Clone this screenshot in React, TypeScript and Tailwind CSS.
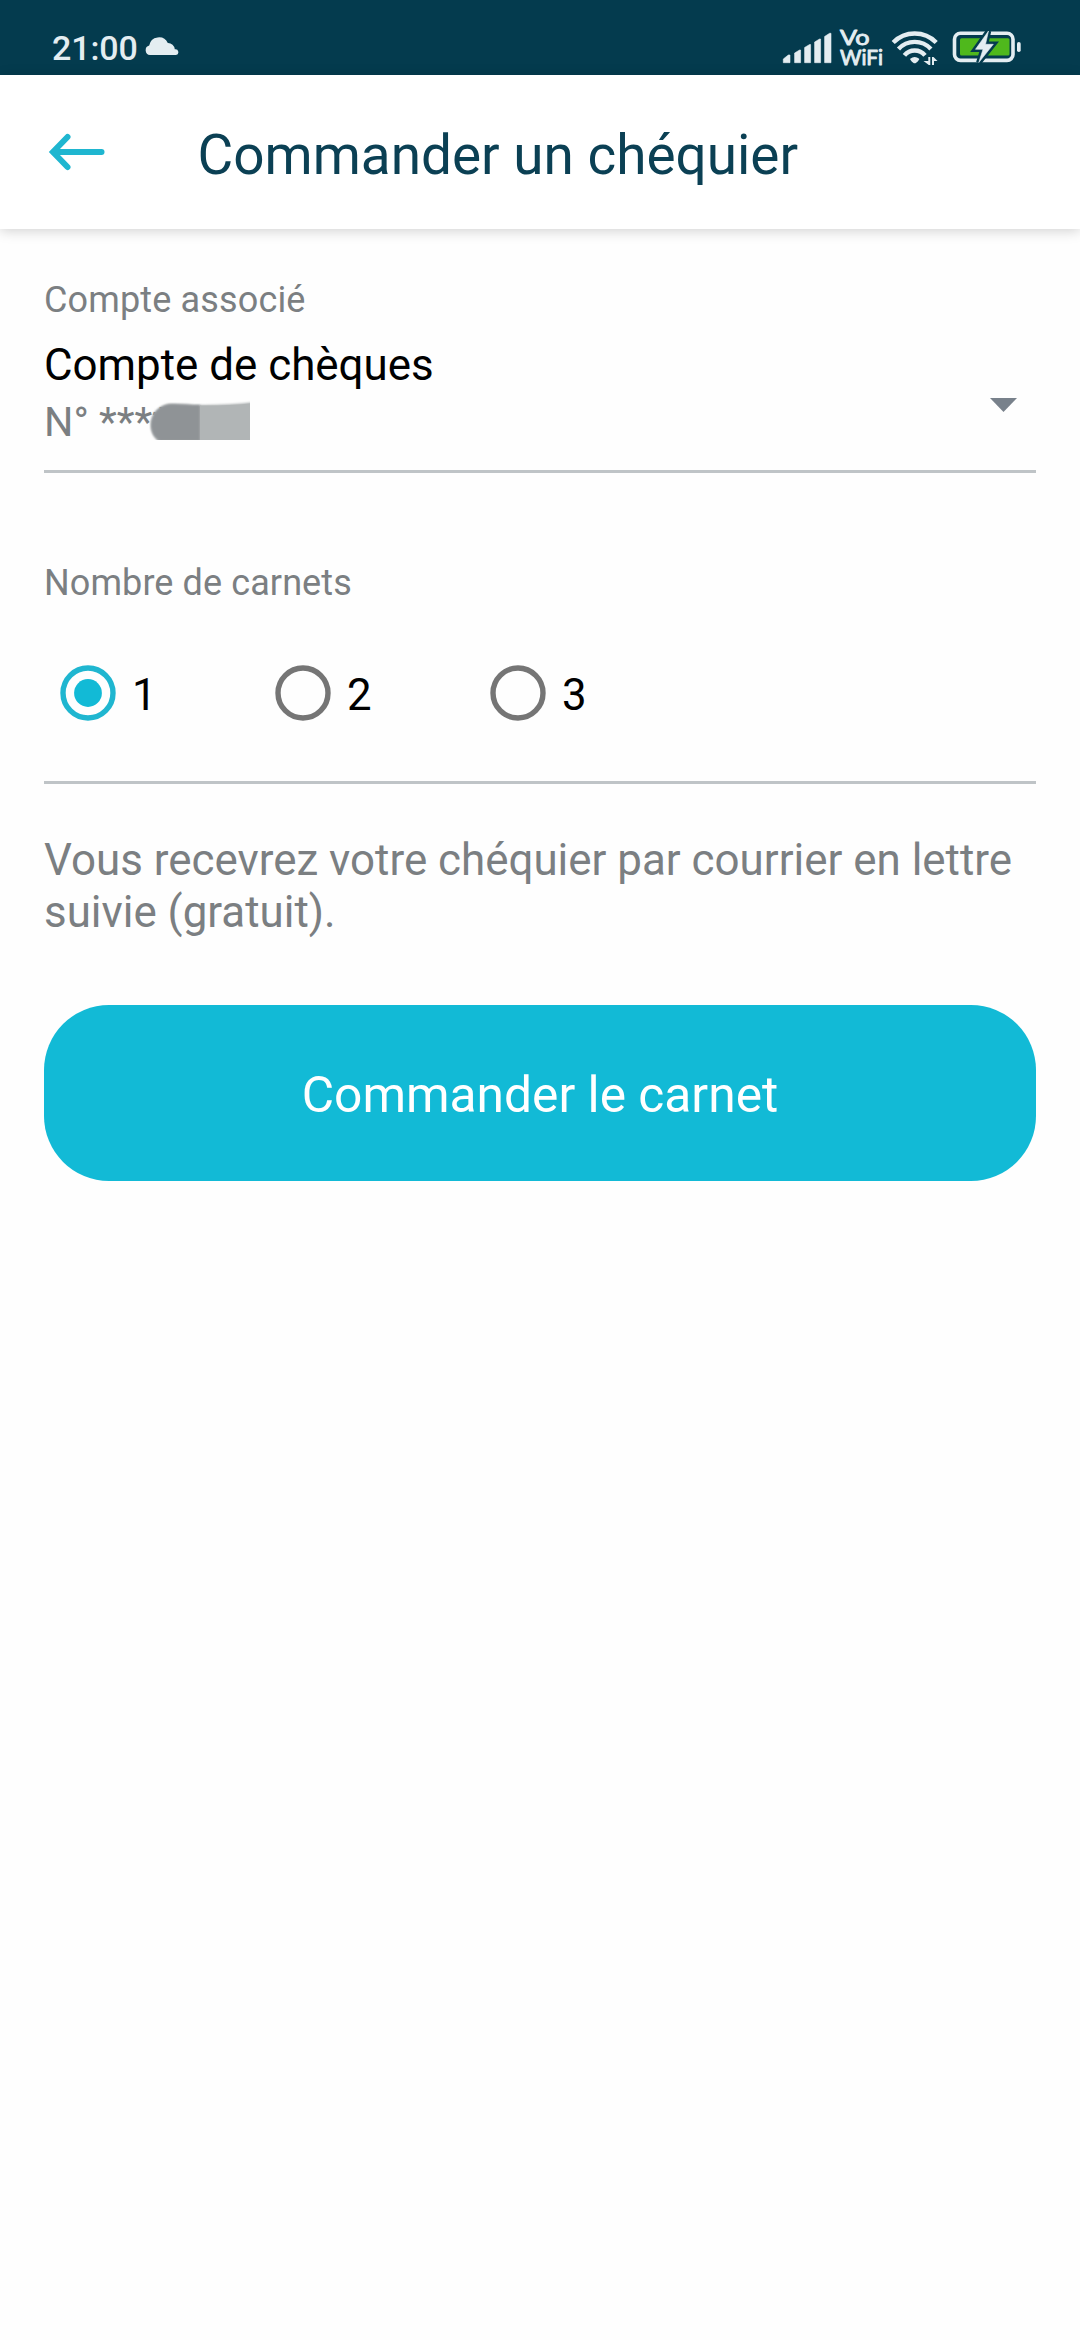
import React, { useState } from 'react';

const StatusBar: React.FC = () => {
    return (
        <div className="h-[75px] bg-[#043b4e] flex items-center justify-between pl-[52px] pr-[58px] text-[#e4edf1]">
            <div className="flex items-center pt-[21px]">
                <span className="text-[34px] leading-[40px] font-medium tracking-[-0.1px] w-[93px]">21:00</span>
                <svg width="34" height="18" viewBox="0 0 34 18" className="mb-[4px]" fill="currentColor">
                    <path d="M5 18a4.800 4.800 0 0 1-.8-9.400 9.800 9.800 0 0 1 18.600-2.500 6.800 6.800 0 0 1 7 6.200A2.900 2.900 0 0 1 31 18z" />
                </svg>
            </div>

            <svg width="240" height="40" viewBox="781 28 240 40" className="mt-[21px] overflow-visible">
                {/* signal */}
                <path
                    d="M782.300 62.700v-3.700l5-4h1.700v7.700zM793.600 62.700v-9.700l5-3h1v12.700zM803.600 62.700v-15.200l5-3h1v18.200zM813.600 62.700v-20.700l5-3h1v23.700zM823.600 62.700v-26.200l5-3.200h1.400v29.400z"
                    fill="currentColor"
                    stroke="currentColor"
                    strokeWidth="0.6"
                    strokeLinejoin="round"
                />

                <g fill="currentColor" stroke="currentColor" strokeWidth="0.9" strokeLinejoin="round" fontFamily="Lato, sans-serif" fontWeight="400">
                    <text x="839" y="44.500" fontSize="21.500" textLength="29.500" lengthAdjust="spacingAndGlyphs">Vo</text>
                    <text x="839" y="65.200" fontSize="20.500" textLength="43" lengthAdjust="spacingAndGlyphs">WiFi</text>
                </g>

                {/* wifi */}
                <g fill="none" stroke="currentColor" strokeWidth="4.400">
                    <path d="M892.200 42.500A30.200 30.200 0 0 1 935.200 42.500" />
                    <path d="M897.500 49A22 22 0 0 1 929.900 49" />
                    <path d="M903.400 55.400A13.300 13.300 0 0 1 924 55.400" />
                </g>
                <path d="M909.200 58.800q4.500-3.800 9 0 .4 1-3 4-1.500 1-3 0-3.400-3-3-4z" fill="currentColor" />
                <path d="M927.300 57h2v8h-1.500l-5.300-4h4.800zM931 65v-8h1.500l4 4h-3.500v4z" fill="currentColor" />

                {/* battery */}
                <rect x="953.500" y="33.200" width="58.500" height="27.200" rx="6" fill="none" stroke="currentColor" strokeWidth="3.600" />
                <rect x="959" y="38.200" width="49.500" height="17.200" rx="1.500" fill="#4fb81c" />
                <rect x="1016" y="42" width="3.700" height="10" rx="1.800" fill="currentColor" />
                <path d="M987.500 31 974.500 49.300H982L977.800 62.500 992.300 44.300H984.500z" fill="#043b4e" stroke="#043b4e" strokeWidth="5.500" />
                <path d="M987.500 31 974.500 49.300H982L977.800 62.500 992.300 44.300H984.500z" fill="currentColor" stroke="currentColor" strokeWidth="0.6" />
            </svg>
        </div>
    );
};

const Header: React.FC = () => {
    return (
        <header className="h-[154px] bg-white flex items-center pl-[48px] shadow-[0_2px_12px_rgba(0,0,0,0.18)]">
            <button aria-label="Retour" className="w-[149.500px]">
                <svg width="58" height="40" viewBox="48 132 58 40" fill="none" stroke="#1fb6d0" strokeWidth="6" strokeLinecap="round">
                    <path d="M67.500 137 53 152l14.500 15" />
                    <path d="M54 152h47.500" />
                </svg>
            </button>
            <h1 className="text-[54.900px] leading-[64px] pt-[6px] text-[#0b4054]">Commander un chéquier</h1>
        </header>
    );
};

const Radio: React.FC<{ label: string; checked: boolean; onSelect: () => void }> = ({ label, checked, onSelect }) => {
    return (
        <button role="radio" aria-checked={checked} onClick={onSelect} className="w-[215px] flex items-center gap-4">
            <svg width="56" height="56" viewBox="0 0 56 56" fill="none">
                <circle cx="28" cy="28" r="25" stroke={checked ? '#1fb6d0' : '#757575'} strokeWidth="5.400" />
                {checked && <circle cx="28" cy="28" r="13.900" fill="#12bad6" />}
            </svg>
            <span className="text-[43.800px] leading-[51px] pt-[4px] text-black">{label}</span>
        </button>
    );
};

const App: React.FC = () => {
    const [carnets, setCarnets] = useState('1');

    return (
        <div className="w-[1080px] h-[2340px] bg-[#fefefe] font-[Roboto,sans-serif] overflow-hidden">
            <StatusBar />
            <Header />

            <main className="px-[44px]">
                <section className="h-[244px] pt-[50px] border-b-[3px] border-[#bfc4c7]">
                    <p className="text-[36px] leading-[42px] tracking-[0.15px] text-[#7b7f82]">Compte associé</p>
                    <div className="flex items-center justify-between pt-[18px] pr-[19px]">
                        <div>
                            <p className="text-[43.900px] leading-[52px] text-black">Compte de chèques</p>
                            <div className="relative mt-[7px] h-12">
                                <p className="text-[41.250px] leading-[48px] text-[#7b7f82]">N° ****</p>
                                {/* masked account number */}
                                <svg className="absolute left-[96px] top-[-1px]" width="110" height="43" viewBox="140 397 110 43">
                                    <defs>
                                        <filter id="soft" x="-10%" y="-20%" width="120%" height="140%">
                                            <feGaussianBlur stdDeviation="1" />
                                        </filter>
                                    </defs>
                                    <path d="M170 404C178 403.500 190 405 200 405 220 405.200 240 404 260 401.500V450H170C158 443 151 436 151 425 151 414 159 405 170 404z" fill="#b1b5b6" filter="url(#soft)" />
                                    <path d="M200 405C190 405 178 403.500 170 404 159 405 151 414 151 425c0 8 4 13 9 16h40z" fill="#8f9396" filter="url(#soft)" />
                                    <path d="M200 405.500V440h50V403.500C235 405 220 405.700 200 405.500z" fill="#b1b5b6" />
                                </svg>
                            </div>
                        </div>
                        <svg width="27" height="14" viewBox="0 0 27 14" className="mt-[24px]">
                            <path d="M0 0h27L13.500 14z" fill="#78818b" />
                        </svg>
                    </div>
                </section>

                <section className="h-[311px] pt-[89px] border-b-[3px] border-[#bfc4c7]">
                    <p className="text-[36px] leading-[42px] tracking-[0.1px] text-[#7b7f82]">Nombre de carnets</p>
                    <div role="radiogroup" className="flex pl-[16px] pt-[61px]">
                        {['1', '2', '3'].map((n) => (
                            <Radio key={n} label={n} checked={carnets === n} onSelect={() => setCarnets(n)} />
                        ))}
                    </div>
                </section>

                <p className="mt-[50px] text-[43.900px] leading-[52px] text-[#7b7f82]">
                    Vous recevrez votre chéquier par courrier en lettre suivie (gratuit).
                </p>

                <button className="mt-[67px] w-full h-[176px] rounded-[65px] bg-[#12bad6] pt-[3px] text-white text-[49.700px] leading-[58px]">
                    Commander le carnet
                </button>
            </main>
        </div>
    );
};

export default App;
